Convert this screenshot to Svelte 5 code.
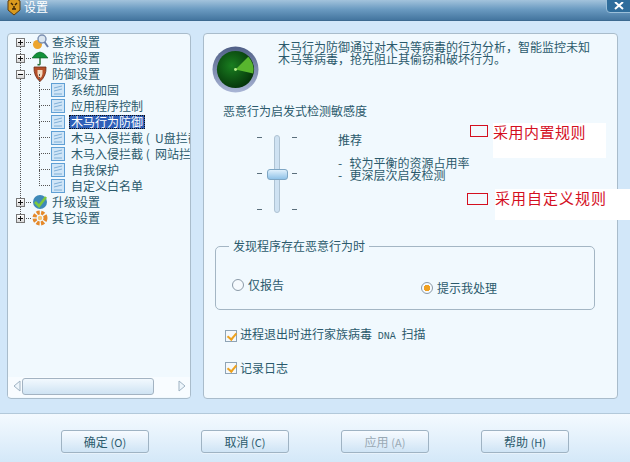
<script>
	const tree = [
		{ label: '查杀设置', icon: 'search', toggle: '+' },
		{ label: '监控设置', icon: 'umbrella', toggle: '+' },
		{ label: '防御设置', icon: 'shield', toggle: '-' },
		{ label: '系统加固', child: true },
		{ label: '应用程序控制', child: true },
		{ label: '木马行为防御', child: true, selected: true },
		{ label: '木马入侵拦截 (  U盘拦截)', child: true },
		{ label: '木马入侵拦截 (  网站拦截)', child: true },
		{ label: '自我保护', child: true },
		{ label: '自定义白名单', child: true, last: true },
		{ label: '升级设置', icon: 'globe', toggle: '+' },
		{ label: '其它设置', icon: 'gear', toggle: '+' }
	];

	const buttons = [
		{ label: '确定', key: '(O)' },
		{ label: '取消', key: '(C)' },
		{ label: '应用', key: '(A)', disabled: true },
		{ label: '帮助', key: '(H)' }
	];
</script>

<div class="window">
	<header class="titlebar">
		<svg class="logo" width="18" height="18" viewBox="0 0 18 18">
			<path d="M3 3 L6 1 L12 1 L15 3 L15 12 L9 17 L3 12 Z" fill="#d99a1e" stroke="#5a3a10" />
			<path d="M6 5 L8 7 M12 5 L10 7 M7 11 L11 11 M9 8 L9 11" stroke="#3a2408" stroke-width="1.4" fill="none" />
		</svg>
		<span class="title">设置</span>
		<div class="close">
			<svg width="10" height="8" viewBox="0 0 10 8"><path d="M1 0 L9 7 M9 0 L1 7" stroke="#fff" stroke-width="2" /></svg>
		</div>
	</header>

	<main class="body">
		<aside class="panel side">
			<ul class="tree">
				{#each tree as item}
					<li class="row" class:child={item.child}>
						{#if item.child}
							<span class="elbow" class:last={item.last}></span>
							<svg class="doc" width="14" height="14" viewBox="0 0 14 14">
								<rect x="0.5" y="0.5" width="13" height="13" fill="#cfe5f7" stroke="#5f9fd4" />
								<path d="M3 5 L11 3 M3 8 L11 6 M3 11 H11" stroke="#7fb0d8" />
							</svg>
							<span class="label" class:selected={item.selected}>{item.label}</span>
						{:else}
							<span class="toggle">
								<span class="hbar"></span>
								{#if item.toggle === '+'}<span class="vbar"></span>{/if}
							</span>
							<span class="dots"></span>
							<svg class="icon" width="18" height="16" viewBox="0 0 18 16">
								{#if item.icon === 'search'}
									<circle cx="6.5" cy="10.5" r="4.5" fill="#eda52e" />
									<circle cx="11" cy="5" r="4" fill="#dbe6f0" stroke="#7b8fb0" stroke-width="1.4" />
									<path d="M13.5 8 L17 13" stroke="#6a7ea8" stroke-width="2" />
								{:else if item.icon === 'umbrella'}
									<path d="M1 8 Q9 -4 17 8 Z" fill="#12913a" stroke="#0b5f27" stroke-width="0.6" />
									<path d="M9 7 V14 Q9 15.5 6.5 14.5" stroke="#1c6a2e" stroke-width="1.4" fill="none" />
								{:else if item.icon === 'shield'}
									<path d="M3 1 L15 1 Q15.5 10 9 15.5 Q2.5 10 3 1 Z" fill="#b6502a" stroke="#6a2a14" stroke-width="0.8" />
									<path d="M6.5 4 H11.5 V8 Q11 11 9 12 Q7 11 6.5 8 Z" fill="#f2dcc4" />
								{:else if item.icon === 'globe'}
									<circle cx="9" cy="8" r="7" fill="#3e89b8" />
									<path d="M4 8 L8 12 L15 3" stroke="#7cc83e" stroke-width="2.6" fill="none" />
								{:else}
									<circle cx="9" cy="8" r="5.5" fill="none" stroke="#e5892a" stroke-width="4" stroke-dasharray="3 1.4" />
									<circle cx="9" cy="8" r="2.2" fill="#f6c271" />
								{/if}
							</svg>
							<span class="label top">{item.label}</span>
						{/if}
					</li>
				{/each}
			</ul>
			<div class="hscroll">
				<svg width="8" height="12" viewBox="0 0 8 12"><path d="M7 1 L1 6 L7 11 Z" fill="#eef6fc" stroke="#9fb2c2" /></svg>
				<div class="thumb"></div>
				<svg width="8" height="12" viewBox="0 0 8 12"><path d="M1 1 L7 6 L1 11 Z" fill="#eef6fc" stroke="#9fb2c2" /></svg>
			</div>
		</aside>

		<section class="panel content">
			<div class="intro">
				<svg class="radar" width="47" height="47" viewBox="0 0 48 48">
					<defs>
						<radialGradient id="scope" cx="0.4" cy="0.4" r="0.7">
							<stop offset="0" stop-color="#1a7f20" />
							<stop offset="1" stop-color="#032c08" />
						</radialGradient>
						<linearGradient id="ring" x1="0" y1="0" x2="0" y2="1">
							<stop offset="0" stop-color="#4f5f86" />
							<stop offset="1" stop-color="#aab6d6" />
						</linearGradient>
					</defs>
					<circle cx="24" cy="24" r="23.5" fill="url(#ring)" />
					<circle cx="24" cy="24" r="19" fill="url(#scope)" />
					<path d="M24 24 L37 11 A19 19 0 0 1 42 28 Z" fill="#58b62e" />
					<circle cx="24" cy="24" r="1.5" fill="#b8f08a" />
				</svg>
				<p>木马行为防御通过对木马等病毒的行为分析，智能监控未知<br />木马等病毒，抢先阻止其偷窃和破坏行为。</p>
			</div>

			<div class="heading">恶意行为启发式检测敏感度</div>

			<div class="sensitivity">
				<div class="slider">
					<div class="ticks"><i></i><i></i><i></i></div>
					<div class="track"><div class="knob"></div></div>
					<div class="ticks"><i></i><i></i><i></i></div>
				</div>
				<div class="level">
					<div class="level-name">推荐</div>
					<div class="level-line">-  较为平衡的资源占用率</div>
					<div class="level-line">-  更深层次启发检测</div>
				</div>
			</div>

			<fieldset class="group">
				<legend>发现程序存在恶意行为时</legend>
				<label class="radio first"><span class="dot"></span>仅报告</label>
				<label class="radio second"><span class="dot on"></span>提示我处理</label>
			</fieldset>

			<div class="check one"><span class="box"></span><span>进程退出时进行家族病毒 <span class="latin">DNA</span> 扫描</span></div>
			<div class="check two"><span class="box"></span><span>记录日志</span></div>

			<div class="note builtin"><span class="mark"></span><span class="note-text">采用内置规则</span></div>
			<div class="note custom"><span class="mark"></span><span class="note-text">采用自定义规则</span></div>
		</section>
	</main>

	<footer class="actions">
		{#each buttons as b}
			<button type="button" disabled={b.disabled}>{b.label} <span class="key">{b.key}</span></button>
		{/each}
	</footer>
</div>

<style>
	:global(body) {
		margin: 0;
	}

	.window {
		position: relative;
		width: 630px;
		height: 462px;
		overflow: hidden;
		display: flex;
		flex-direction: column;
		background: #d2e7f9;
		font-family: "Noto Sans CJK SC", "Liberation Sans", sans-serif;
		font-size: 12px;
		line-height: 12px;
		color: #2b5a6c;
	}

	.titlebar {
		height: 21px;
		flex: none;
		display: flex;
		align-items: center;
		position: relative;
		padding-left: 5px;
		box-sizing: border-box;
		background: linear-gradient(#a3c3dc, #6c9cc2 45%, #44759f);
		border-bottom: 1px solid #3d6a90;
	}

	.logo {
		margin-top: -6px;
	}

	.title {
		margin-left: 1px;
		margin-top: -6px;
		color: #fff;
		font-size: 12px;
	}

	.close {
		position: absolute;
		right: -6px;
		top: -6px;
		width: 30px;
		height: 19px;
		box-sizing: border-box;
		background: #2f6d9c;
		border: 1px solid #9cc0da;
		border-radius: 4px;
		display: flex;
		align-items: flex-end;
		padding: 0 0 2px 7px;
	}

	.body {
		flex: 1;
		display: flex;
		gap: 12px;
		padding: 12px 12px 14px 7px;
		min-height: 0;
	}

	.panel {
		position: relative;
		box-sizing: border-box;
		background: #f1f9fe;
		border: 1px solid #a9bccb;
		border-radius: 4px;
	}

	.side {
		width: 184px;
		display: flex;
		flex-direction: column;
		overflow: hidden;
	}

	.tree {
		list-style: none;
		margin: 0;
		padding: 0;
		flex: 1;
		position: relative;
	}

	.tree::before {
		content: '';
		position: absolute;
		left: 12px;
		top: 10px;
		height: 176px;
		border-left: 1px dotted #555;
	}

	.row {
		position: relative;
		height: 16px;
		display: flex;
		align-items: center;
		white-space: pre;
		padding-left: 8px;
		overflow: hidden;
	}

	.row.child {
		padding-left: 43px;
		overflow: visible;
	}

	.toggle {
		position: relative;
		z-index: 1;
		width: 9px;
		height: 9px;
		box-sizing: border-box;
		flex: none;
		background: linear-gradient(#fff, #d8d8d8);
		border: 1px solid #777;
		margin-right: 1px;
	}

	.hbar {
		position: absolute;
		left: 1px;
		top: 3px;
		width: 5px;
		height: 1px;
		background: #111;
	}

	.vbar {
		position: absolute;
		left: 3px;
		top: 1px;
		width: 1px;
		height: 5px;
		background: #111;
	}

	.dots {
		width: 5px;
		border-top: 1px dotted #555;
		flex: none;
	}

	.icon {
		flex: none;
		margin-right: 2px;
	}

	.elbow {
		position: absolute;
		left: 31px;
		top: -8px;
		width: 11px;
		height: 16px;
		box-sizing: border-box;
		border-left: 1px dotted #555;
		border-bottom: 1px dotted #555;
	}

	.doc {
		flex: none;
		margin-right: 4px;
	}

	.label {
		padding: 1px 2px;
	}

	.label.top {
		padding-left: 1px;
		font-size: 12px;
	}

	.label.selected {
		background: #2f5fb8;
		color: #fff;
		outline: 1px dotted #111;
		outline-offset: -1px;
	}

	.hscroll {
		height: 18px;
		flex: none;
		display: flex;
		align-items: center;
		padding: 0 4px 2px 5px;
		gap: 1px;
		margin-bottom: 1px;
		background: #f8fcff;
	}

	.thumb {
		width: 132px;
		height: 17px;
		box-sizing: border-box;
		margin-right: 22px;
		background: linear-gradient(#f2f9fe, #cfe3f3);
		border: 1px solid #a3b3c2;
		border-radius: 3px;
	}

	.hscroll svg:last-child {
		margin-left: 1px;
	}

	.content {
		flex: 1;
		padding: 12px 8px 0 8px;
	}

	.intro {
		display: flex;
		height: 48px;
		align-items: flex-start;
	}

	.radar {
		flex: none;
		margin-right: 19px;
	}

	.intro p {
		margin: -5px 0 0 0;
		line-height: 12px;
		font-size: 12px;
	}

	.heading {
		margin: 11px 0 0 11px;
	}

	.sensitivity {
		display: flex;
		margin-top: 18px;
		height: 84px;
	}

	.slider {
		display: flex;
		gap: 12px;
		height: 78px;
		margin-left: 45px;
	}

	.ticks {
		display: flex;
		flex-direction: column;
		justify-content: space-between;
		padding: 2px 0 3px;
		width: 5px;
	}

	.ticks i {
		display: block;
		height: 1px;
		background: #5a6f7c;
	}

	.track {
		position: relative;
		width: 6px;
		height: 78px;
		box-sizing: border-box;
		background: #cfe2f2;
		border: 1px solid #afc3d3;
		border-radius: 3px;
	}

	.knob {
		position: absolute;
		left: -8px;
		top: 33px;
		width: 21px;
		height: 11px;
		box-sizing: border-box;
		background: linear-gradient(#dff0fc, #8fc2e8);
		border: 1px solid #7ea6c4;
		border-radius: 3px;
	}

	.level {
		margin-left: 41px;
		margin-top: -1px;
	}

	.level-name {
		margin-bottom: 11px;
	}

	.level-line {
		white-space: pre;
		word-spacing: 1px;
	}

	.group {
		position: relative;
		box-sizing: border-box;
		margin: 21px 0 0 3px;
		padding: 0;
		width: 380px;
		height: 70px;
		border: 1px solid #a4b6c4;
		border-radius: 5px;
	}

	.group legend {
		margin-left: 13px;
		padding: 0 4px;
		line-height: 12px;
	}

	.radio {
		position: absolute;
		display: flex;
		align-items: center;
		gap: 4px;
	}

	.radio.first {
		left: 16px;
		top: 27px;
	}

	.radio.second {
		left: 205px;
		top: 30px;
	}

	.dot {
		width: 12px;
		height: 12px;
		box-sizing: border-box;
		border: 1px solid #8b9aa8;
		border-radius: 50%;
		background: #f6fafd;
	}

	.dot.on {
		background: radial-gradient(circle, #f0a020 0 3px, #f6fafd 3.5px);
	}

	.check {
		display: flex;
		align-items: center;
		gap: 3px;
		margin-left: 13px;
		white-space: pre;
	}

	.check.one {
		margin-top: 18px;
	}

	.check.two {
		margin-top: 19px;
	}

	.latin {
		font-family: "Liberation Mono", monospace;
		font-size: 10px;
		margin: 0 3px;
	}

	.box {
		position: relative;
		width: 12px;
		height: 12px;
		box-sizing: border-box;
		background: #f5f9fc;
		border: 1px solid #8fa4b5;
	}

	.box::after {
		content: '';
		position: absolute;
		left: 3px;
		top: 0;
		width: 4px;
		height: 7px;
		border: solid #eda21f;
		border-width: 0 2px 2px 0;
		transform: rotate(40deg);
	}

	.note {
		position: absolute;
		display: flex;
		align-items: flex-start;
		color: #d40f1f;
		font-size: 15px;
		line-height: 15px;
		white-space: nowrap;
	}

	.note.builtin {
		left: 266px;
		top: 89px;
	}

	.note.custom {
		left: 263px;
		top: 155px;
	}

	.mark {
		width: 18px;
		height: 12px;
		margin-top: 2px;
		box-sizing: border-box;
		border: 1px solid #d40f1f;
	}

	.note.custom .mark {
		width: 21px;
		margin-top: 4px;
	}

	.note-text {
		background: #fff;
		margin-left: 5px;
		letter-spacing: 0.5px;
		padding: 1px 20px 19px 0;
	}

	.note.custom .note-text {
		margin-left: 7px;
		letter-spacing: 1px;
		padding: 1px 40px 15px 0;
	}

	.actions {
		height: 49px;
		flex: none;
		box-sizing: border-box;
		display: flex;
		gap: 52px;
		padding: 16px 0 0 61px;
		background: linear-gradient(#f4faff, #d4e8f8);
		border-top: 1px solid #b3c9da;
	}

	.actions button {
		width: 88px;
		height: 23px;
		padding: 0;
		font: inherit;
		color: #2b5a6c;
		background: linear-gradient(#f7fbff, #cfe4f5);
		border: 1px solid #9fb3c3;
		border-radius: 3px;
		box-shadow: 0 1px 0 #e7f2fb;
	}

	.actions button:disabled {
		color: #9aa9b4;
	}

	.key {
		font-size: 11px;
	}
</style>
